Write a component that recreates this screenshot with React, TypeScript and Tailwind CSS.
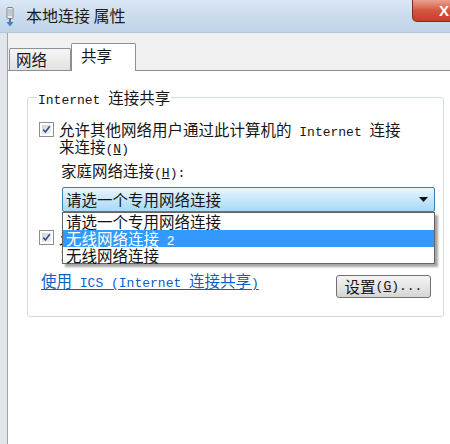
import React from "react";

const MONO = "font-['Liberation_Mono','Noto_Sans_CJK_SC',monospace] text-[13px] leading-[10px]";

function Mono({ children }: { children: React.ReactNode }) {
  return <span className={MONO}>{children}</span>;
}

function CheckBox() {
  return (
    <div className="w-[15px] h-[15px] shrink-0 border border-[#8e8f8f] bg-white p-[2px]">
      <div className="w-full h-full bg-gradient-to-br from-[#cfd3d8] to-[#f4f4f4] flex items-center justify-center">
        <svg width="11" height="11" viewBox="0 0 11 11">
          <path d="M1.5 5.5 L4.2 8.5 L9.5 1.5" fill="none" stroke="#3c4d8f" strokeWidth="2" />
        </svg>
      </div>
    </div>
  );
}

export default function App() {
  return (
    <div className="w-[450px] h-[444px] overflow-hidden bg-white flex flex-col font-['Noto_Sans_CJK_SC',sans-serif] text-[#151515]">
      {/* Title bar */}
      <div className="h-[33px] shrink-0 flex items-start bg-gradient-to-b from-[#dbe7f4] via-[#cbdcee] to-[#bfd4ea] border-b border-[#b3c5d9]">
        <svg width="12" height="20" viewBox="0 0 12 20" className="ml-[4px] mt-[7px]">
          <rect x="3" y="0.5" width="6" height="11" rx="1" fill="#e8ecef" stroke="#7d8590" />
          <rect x="4.5" y="2" width="1" height="7" fill="#9aa3ad" />
          <rect x="6.5" y="2" width="1" height="7" fill="#9aa3ad" />
          <rect x="5" y="11.5" width="2" height="4" fill="#6d7680" />
          <path d="M2.5 15 L9.5 15 L6 19.5 Z" fill="#3d7fd0" />
        </svg>
        <div className="ml-[10px] mt-[5px] text-[16px] leading-[20px] text-[#1b1b1b]">本地连接 属性</div>
        <div className="ml-auto -mr-[26px] w-[64px] h-[22px] rounded-bl-[5px] border border-t-0 border-[#7b2b22] bg-gradient-to-b from-[#e9a091] via-[#d5553f] to-[#c4402b] flex items-center justify-center">
          <span className="text-white font-bold text-[15px] leading-none font-['Liberation_Sans',sans-serif]">X</span>
        </div>
      </div>

      <div className="flex flex-1 min-h-0">
        {/* left frame */}
        <div className="w-[8px] shrink-0 bg-[#e2e5e9] border-r border-[#a3a7ad]" />
        <div className="flex-1 flex flex-col min-w-0">
          {/* tabs */}
          <div className="h-[37px] shrink-0 bg-[#f0f0f0] flex items-end pl-[1px]">
            <div className="w-[62px] h-[22px] border border-b-0 border-[#8c8f96] rounded-t-[2px] bg-gradient-to-b from-[#f6f6f6] to-[#e2e2e2] flex items-center pl-[6px] text-[15.5px] leading-[17px]">
              网络
            </div>
            <div className="relative top-[1px] z-10 w-[65px] h-[28px] border border-b-0 border-[#8c8f96] rounded-t-[2px] bg-white flex items-start pt-[3px] pl-[9px] text-[15.5px] leading-[17px]">
              共享
            </div>
          </div>
          {/* panel */}
          <div className="flex-1 bg-white border-t border-[#8c8f96] pl-[19px]">
            <div className="relative mt-[26px] w-[417px] h-[220px] border border-[#d5dce2] rounded-[3px] text-[15.5px] leading-[17px]">
              <div className="absolute -top-[9px] left-[9px] px-[1px] bg-white">
                <Mono>Internet </Mono>连接共享
              </div>

              <div className="pt-[23px] pl-[11px] flex items-start gap-[5px]">
                <div className="mt-[1px]">
                  <CheckBox />
                </div>
                <div>
                  <div className="h-[17px]">
                    允许其他网络用户通过此计算机的<Mono> Internet </Mono>连接
                  </div>
                  <div className="h-[17px]">
                    来连接<Mono>(<span className="underline">N</span>)</Mono>
                  </div>
                </div>
              </div>

              <div className="mt-[7px] pl-[33px] h-[17px]">
                家庭网络连接<Mono>(<span className="underline">H</span>):</Mono>
              </div>

              <div className="relative mt-[8px] ml-[34px] w-[373px] h-[25px] border border-[#3c7fb1] rounded-[2px] bg-gradient-to-b from-[#eaf6fd] via-[#c6e7f9] to-[#a7d9f5] flex items-center pl-[3px]">
                <span>请选一个专用网络连接</span>
                <svg width="9" height="5" viewBox="0 0 9 5" className="ml-auto mr-[6px]">
                  <path d="M0 0 L9 0 L4.5 5 Z" fill="#111" />
                </svg>
                <div className="absolute left-[-1px] top-[24px] z-20 w-[373px] border border-[#646464] bg-white shadow-[3px_3px_2px_rgba(0,0,0,0.35)] flex flex-col">
                  <div className="h-[17px] pl-[3px] text-[#111]">请选一个专用网络连接</div>
                  <div className="h-[17px] pl-[3px] bg-[#3399ff] text-white">
                    无线网络连接<Mono> 2</Mono>
                  </div>
                  <div className="h-[16px] pl-[3px] text-[#111]">无线网络连接</div>
                </div>
              </div>

              <div className="mt-[17px] pl-[11px] flex items-start gap-[5px]">
                <div className="mt-[1px]">
                  <CheckBox />
                </div>
                <div>
                  <div className="h-[17px]">
                    允许其他网络用户控制或禁用共享的<Mono> Internet </Mono>连接
                  </div>
                  <div className="h-[17px]">
                    ：<Mono>(<span className="underline">O</span>)</Mono>
                  </div>
                </div>
              </div>

              <div className="mt-[9px] flex items-start justify-between pl-[13px] pr-[12px]">
                <span className="h-[19px] text-[#0a5fc4] underline underline-offset-[2px]">
                  使用<Mono> ICS (Internet </Mono>连接共享<Mono>)</Mono>
                </span>
                <div className="mt-[3px] w-[95px] h-[23px] border border-[#707070] rounded-[3px] bg-gradient-to-b from-[#f4f4f4] via-[#e6e6e6] to-[#d6d6d6] flex items-center justify-center">
                  设置<Mono>(<span className="underline">G</span>)...</Mono>
                </div>
              </div>
            </div>
          </div>
        </div>
      </div>
    </div>
  );
}
